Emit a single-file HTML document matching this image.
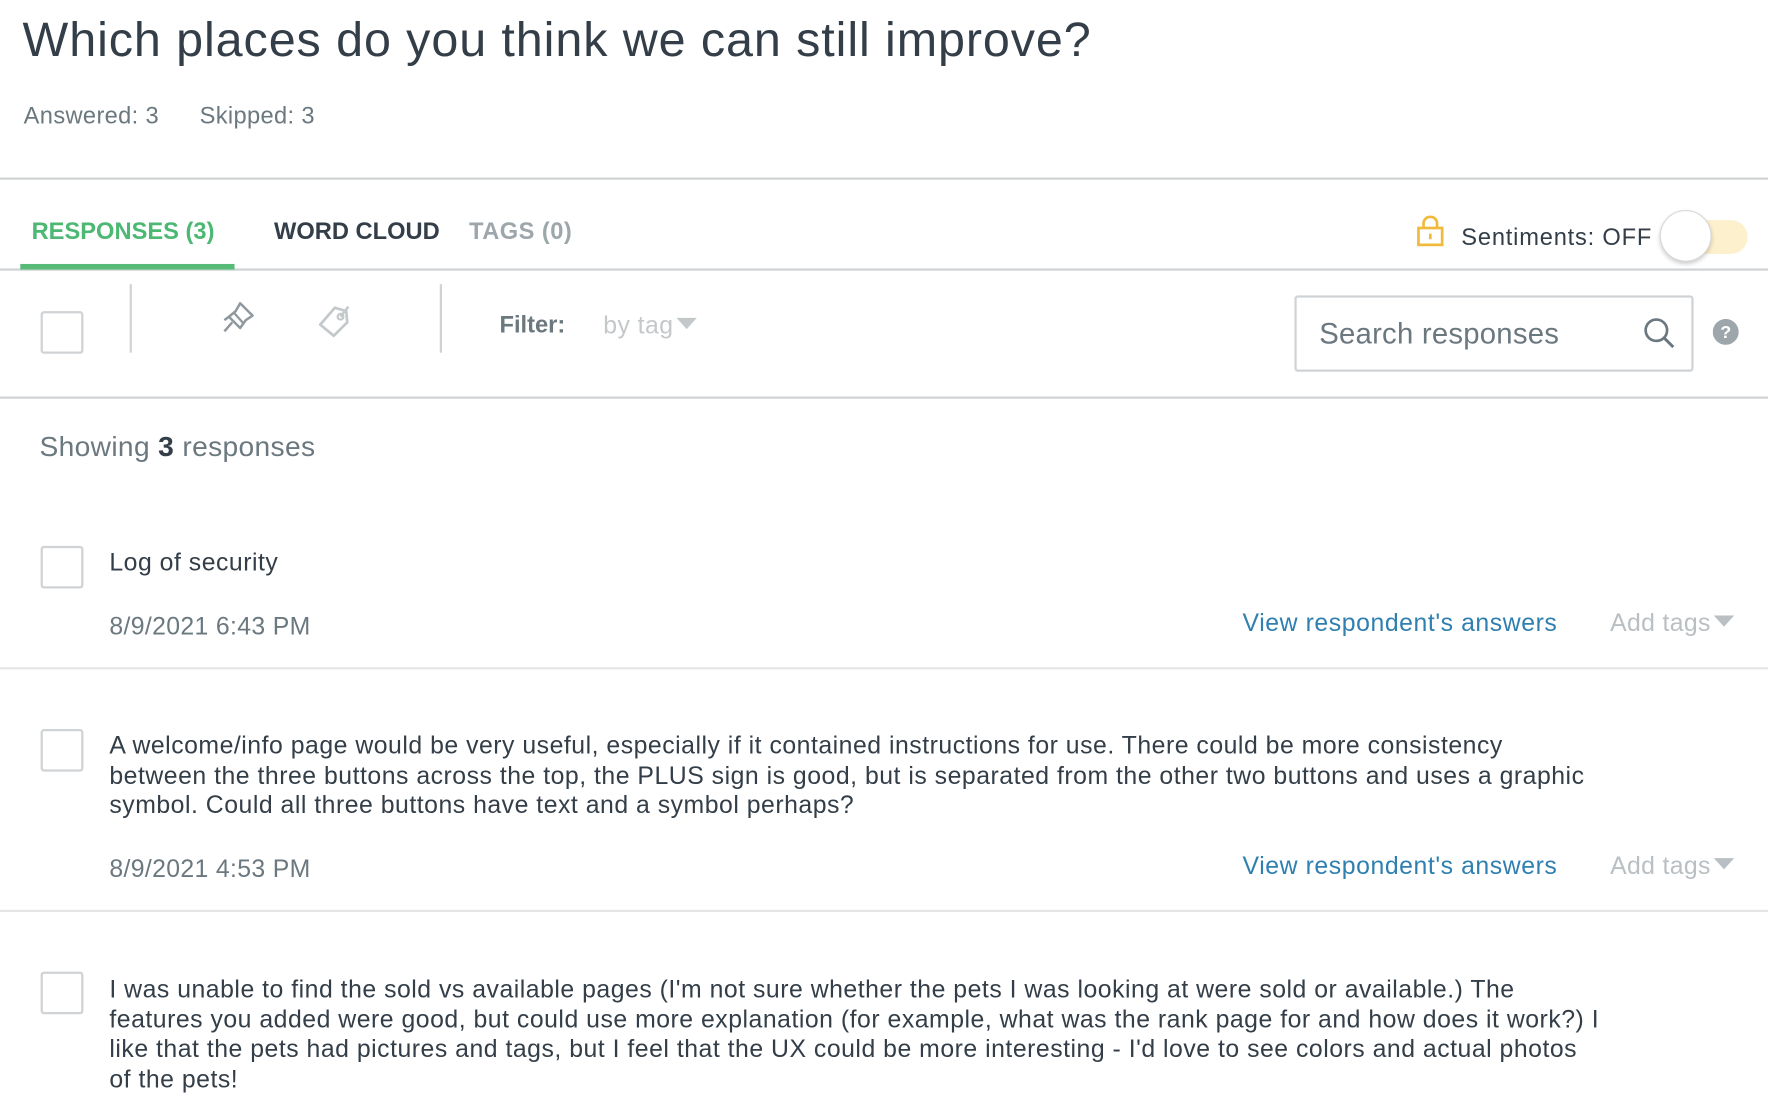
<!DOCTYPE html>
<html><head><meta charset="utf-8"><style>
html,body{margin:0;padding:0;background:#fff;overflow:hidden;width:1768px;height:1112px}
#w{position:absolute;left:0;top:0;width:1568px;height:990px;transform:scale(1.12755,1.1232);transform-origin:0 0;font-family:"Liberation Sans",sans-serif;color:#333e48}
.a{position:absolute;white-space:nowrap}
.hl{position:absolute;left:0;width:1568px;height:2px;background:#d0d3d5}
.cb{position:absolute;left:36px;border:2px solid #d0d3d5;border-radius:3px;width:34px;height:34px}
.txt{font-size:22px;letter-spacing:0.45px;line-height:26.6px;color:#333e48}
.date{font-size:22px;letter-spacing:0.3px;color:#6b787f}
.link{font-size:22px;letter-spacing:0.5px;color:#2f7fb0}
.add{font-size:22px;letter-spacing:0.3px;color:#b9bfc3}
.tri{display:inline-block;width:0;height:0;border-left:9px solid transparent;border-right:9px solid transparent;border-top:10px solid #b9bfc3;vertical-align:4px;margin-left:3px}
</style></head><body><div id="w">
<div class="a" style="left:20px;top:10px;font-size:43px;line-height:52px;color:#333e48;letter-spacing:0.8px">Which places do you think we can still improve?</div>
<div class="a" style="left:21px;top:91px;font-size:21px;line-height:26px;color:#6b787f;letter-spacing:0.3px">Answered: 3<span style="display:inline-block;width:36px"></span>Skipped: 3</div>
<div class="hl" style="top:158px"></div>
<div class="a" style="left:28px;top:193px;font-size:21px;line-height:28px;font-weight:bold;color:#4cb873">RESPONSES (3)</div>
<div class="a" style="left:243px;top:193px;font-size:21px;line-height:28px;font-weight:bold;color:#333e48">WORD CLOUD</div>
<div class="a" style="left:416px;top:193px;font-size:21px;line-height:28px;font-weight:bold;color:#9da6ab;letter-spacing:0.4px">TAGS (0)</div>
<div class="hl" style="top:239px"></div>
<div class="a" style="left:18px;top:235px;width:190px;height:5px;background:#57bb77"></div>
<svg class="a" style="left:1256px;top:192px" width="26" height="28" viewBox="0 0 26 28"><rect x="2" y="11" width="21" height="15" fill="none" stroke="#f0ba3c" stroke-width="2.4"/><path d="M6.5 11V7a6 6 0 0 1 12 0v4" fill="none" stroke="#f0ba3c" stroke-width="2.4"/><line x1="12.5" y1="16" x2="12.5" y2="21" stroke="#f0ba3c" stroke-width="2.4"/></svg>
<div class="a" style="left:1296px;top:198px;font-size:21px;line-height:28px;color:#333e48;letter-spacing:0.7px">Sentiments: OFF</div>
<div class="a" style="left:1490px;top:196px;width:60px;height:30px;border-radius:15px;background:#fcf0cd"></div>
<div class="a" style="left:1472px;top:187px;width:46px;height:46px;border-radius:50%;background:#fff;border:1px solid #d8d8d8;box-sizing:border-box;box-shadow:0 2px 4px rgba(0,0,0,.2)"></div>
<div class="cb" style="top:277px"></div>
<div class="a" style="left:115px;top:253px;width:2px;height:61px;background:#d0d3d5"></div>
<div class="a" style="left:390px;top:253px;width:2px;height:61px;background:#d0d3d5"></div>
<svg class="a" style="left:194px;top:268px" width="36" height="34" viewBox="0 0 36 34"><path d="M19 2 L30 13 L24 17 L19 24 L9 14 L15 9 Z" fill="none" stroke="#8f989e" stroke-width="2.2" stroke-linejoin="round"/><path d="M9 14 L5 17 M12 19 L5 27" stroke="#8f989e" stroke-width="2.2" fill="none"/><path d="M14 11 L22 20" stroke="#8f989e" stroke-width="2" fill="none"/></svg>
<svg class="a" style="left:280px;top:270px" width="34" height="34" viewBox="0 0 34 34"><path d="M17 4 L27 7 L28 17 L16 29 L4 19 Z" fill="none" stroke="#c3c8cb" stroke-width="2.4" stroke-linejoin="round"/><circle cx="22" cy="12" r="2.5" fill="none" stroke="#c3c8cb" stroke-width="2"/><path d="M22 12 L29 3" stroke="#c3c8cb" stroke-width="2.2"/></svg>
<div class="a" style="left:443px;top:276px;font-size:21px;line-height:28px;font-weight:bold;color:#6b787f">Filter:</div>
<div class="a" style="left:535px;top:276px;font-size:22px;line-height:28px;color:#c3c8cb;letter-spacing:0.4px">by tag<span class="tri" style="border-top-color:#c3c8cb"></span></div>
<div class="a" style="left:1148px;top:263px;width:354px;height:68px;border:2px solid #d0d3d5;border-radius:3px;box-sizing:border-box"></div>
<div class="a" style="left:1170px;top:281px;font-size:26px;line-height:32px;color:#6b787f;letter-spacing:0.2px">Search responses</div>
<svg class="a" style="left:1457px;top:282px" width="30" height="30" viewBox="0 0 30 30"><circle cx="12" cy="12" r="9.5" fill="none" stroke="#6b787f" stroke-width="2.4"/><path d="M19 19 L27 27" stroke="#6b787f" stroke-width="2.6"/></svg>
<svg class="a" style="left:1519px;top:284px" width="23" height="23" viewBox="0 0 23 23"><circle cx="11.5" cy="11.5" r="11.5" fill="#9da6ab"/><text x="11.5" y="17" font-family="Liberation Sans" font-weight="bold" font-size="16" fill="#fff" text-anchor="middle">?</text></svg>
<div class="hl" style="top:353px"></div>
<div class="a" style="left:35px;top:382px;font-size:25px;line-height:32px;color:#6b787f;letter-spacing:0.3px">Showing <b style="color:#333e48">3</b> responses</div>
<div class="cb" style="top:486px"></div>
<div class="a txt" style="left:97px;top:488px">Log of security</div>
<div class="a date" style="left:97px;top:545px;line-height:26px">8/9/2021 6:43 PM</div>
<div class="a link" style="left:1102px;top:542px;line-height:26px">View respondent's answers</div>
<div class="a add" style="left:1428px;top:542px;line-height:26px">Add tags<span class="tri"></span></div>
<div class="hl" style="top:594px;background:#e3e5e6"></div>
<div class="cb" style="top:649px"></div>
<div class="a txt" style="left:97px;top:651px">A welcome/info page would be very useful, especially if it contained instructions for use. There could be more consistency<br>between the three buttons across the top, the PLUS sign is good, but is separated from the other two buttons and uses a graphic<br>symbol. Could all three buttons have text and a symbol perhaps?</div>
<div class="a date" style="left:97px;top:761px;line-height:26px">8/9/2021 4:53 PM</div>
<div class="a link" style="left:1102px;top:758px;line-height:26px">View respondent's answers</div>
<div class="a add" style="left:1428px;top:758px;line-height:26px">Add tags<span class="tri"></span></div>
<div class="hl" style="top:810px;background:#e3e5e6"></div>
<div class="cb" style="top:865px"></div>
<div class="a txt" style="left:97px;top:868px">I was unable to find the sold vs available pages (I'm not sure whether the pets I was looking at were sold or available.) The<br>features you added were good, but could use more explanation (for example, what was the rank page for and how does it work?) I<br>like that the pets had pictures and tags, but I feel that the UX could be more interesting - I'd love to see colors and actual photos<br>of the pets!</div>
</div></body></html>
